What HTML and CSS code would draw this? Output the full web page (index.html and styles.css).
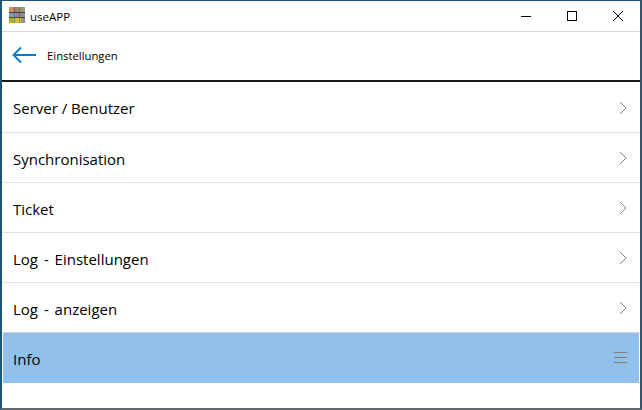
FILE: index.html
```html
<!DOCTYPE html>
<html lang="de">
<head>
    <meta charset="UTF-8">
    <meta name="viewport" content="width=device-width, initial-scale=1.0">
    <title>useAPP</title>
    <link rel="stylesheet" href="styles.css">
</head>
<body>
    <div class="window">
        <div class="titlebar">
            <svg class="app-icon" width="16" height="16" viewBox="0 0 16 16">
                <rect x="0" y="0" width="4" height="5" fill="#d09050"/>
                <rect x="4" y="0" width="4" height="5" fill="#b9747a"/>
                <rect x="8" y="0" width="4" height="5" fill="#8f9a6a"/>
                <rect x="12" y="0" width="4" height="5" fill="#a09a78"/>
                <rect x="0" y="5" width="4" height="6" fill="#7f9aa8"/>
                <rect x="4" y="5" width="4" height="6" fill="#7f9fb0"/>
                <rect x="8" y="5" width="4" height="6" fill="#a974a8"/>
                <rect x="12" y="5" width="4" height="6" fill="#8a8a9a"/>
                <rect x="0" y="11" width="4" height="5" fill="#a8b428"/>
                <rect x="4" y="11" width="4" height="5" fill="#b8c838"/>
                <rect x="8" y="11" width="4" height="5" fill="#e0c048"/>
                <rect x="12" y="11" width="4" height="5" fill="#8c8cb0"/>
                <rect x="0" y="5" width="16" height="1" fill="#444444"/>
                <rect x="0" y="10" width="16" height="1" fill="#444444"/>
                <rect x="5" y="0" width="1" height="16" fill="#555555" opacity="0.6"/>
                <rect x="10" y="0" width="1" height="16" fill="#555555" opacity="0.6"/>
            </svg>
            <span class="app-name">useAPP</span>
            <div class="controls">
                <svg class="control" width="46" height="30" viewBox="0 0 46 30"><path d="M18 15.500h10" stroke="#000" fill="none"/></svg>
                <svg class="control" width="46" height="30" viewBox="0 0 46 30"><rect x="18.500" y="10.500" width="9" height="9" stroke="#000" fill="none"/></svg>
                <svg class="control" width="46" height="30" viewBox="0 0 46 30"><path d="M18 10l10 10M28 10l-10 10" stroke="#000" fill="none"/></svg>
            </div>
        </div>
        <div class="header">
            <svg class="back" width="24" height="18" viewBox="0 0 24 18"><path d="M24 9H1.500M9 1.500L1.500 9 9 16.500" stroke="#0078d7" stroke-width="1.800" fill="none"/></svg>
            <span class="page-title">Einstellungen</span>
        </div>
        <ul class="menu">
            <li class="item">Server / Benutzer<svg class="chevron" width="8" height="14" viewBox="0 0 8 14"><path d="M1 1l6 6-6 6" stroke="#808080" fill="none"/></svg></li>
            <li class="item">Synchronisation<svg class="chevron" width="8" height="14" viewBox="0 0 8 14"><path d="M1 1l6 6-6 6" stroke="#808080" fill="none"/></svg></li>
            <li class="item">Ticket<svg class="chevron" width="8" height="14" viewBox="0 0 8 14"><path d="M1 1l6 6-6 6" stroke="#808080" fill="none"/></svg></li>
            <li class="item log">Log - Einstellungen<svg class="chevron" width="8" height="14" viewBox="0 0 8 14"><path d="M1 1l6 6-6 6" stroke="#808080" fill="none"/></svg></li>
            <li class="item log">Log - anzeigen<svg class="chevron" width="8" height="14" viewBox="0 0 8 14"><path d="M1 1l6 6-6 6" stroke="#808080" fill="none"/></svg></li>
            <li class="item selected">Info<span class="burger"></span></li>
        </ul>
    </div>
</body>
</html>
```
FILE: styles.css
```css
html, body {
    margin: 0;
    padding: 0;
    height: 100%;
    overflow: hidden;
}
.window {
    box-sizing: border-box;
    width: 642px;
    height: 410px;
    background: #ffffff;
    border: 1px solid #1c5575;
    border-width: 1px 2px 2px 2px;
    border-right-color: #34566a;
    border-bottom-color: #5e6a70;
    font-family: "Open Sans", Arial, sans-serif;
    color: #000000;
}
.titlebar {
    display: flex;
    align-items: center;
    height: 30px;
    border-bottom: 1px solid #d9d9d9;
}
.app-icon {
    margin-left: 7px;
    margin-bottom: 2px;
}
.app-name {
    margin-left: 5px;
    font-size: 11.5px;
}
.controls {
    display: flex;
    margin-left: auto;
    margin-right: -1px;
}
.header {
    display: flex;
    align-items: center;
    height: 48px;
    border-bottom: 2px solid #1a1a1a;
}
.back {
    margin-left: 10px;
    margin-bottom: 2px;
}
.page-title {
    margin-left: 11px;
    margin-bottom: 2px;
    font-size: 11.3px;
}
.menu {
    list-style: none;
    margin: 0;
    padding: 0;
}
.item {
    box-sizing: border-box;
    display: flex;
    align-items: center;
    justify-content: space-between;
    height: 50px;
    padding: 2px 13px 0 11px;
    border-bottom: 1px solid #e3e3e3;
    font-size: 15px;
}
.item:first-child {
    height: 51px;
}
.item:nth-child(5) {
    border-bottom-color: #d8d8d8;
}
.log {
    word-spacing: 2px;
}
.chevron {
    margin-bottom: 1px;
}
.selected {
    margin: 0 1px;
    padding-left: 10px;
    padding-right: 12px;
    background: #91c1ea;
    border-bottom: none;
}
.burger {
    display: block;
    width: 13px;
    height: 9px;
    margin-bottom: 3px;
    border-top: 1px solid #857e78;
    border-bottom: 1px solid #857e78;
    background: linear-gradient(#857e78, #857e78) center / 100% 1px no-repeat;
}
```
